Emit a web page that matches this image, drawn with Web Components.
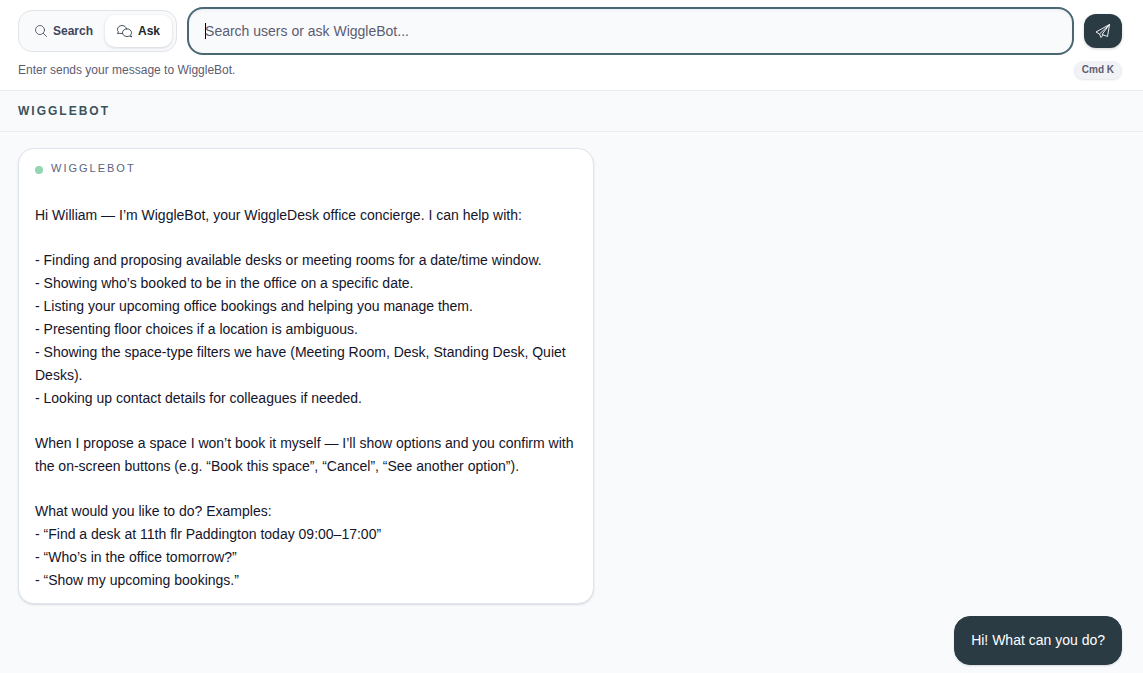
<!DOCTYPE html>
<html lang="en">
<head>
<meta charset="utf-8">
<meta name="viewport" content="width=device-width, initial-scale=1">
<title>WiggleBot</title>
<style>
  body {
    --dark: #2a3b44;
    --accent: #4a6873;
    --surface: #f8fafc;
    --border: #e0e4ec;
    --muted: #5c5c72;
    margin: 0;
    min-height: 100vh;
    background: var(--surface);
    color: #14142b;
    font: 14px/23px "Liberation Sans", Arial, sans-serif;
  }
</style>
</head>
<body>
<command-bar placeholder="Search users or ask WiggleBot...">
  <mode-switch slot="mode"></mode-switch>
  <span slot="hint">Enter sends your message to WiggleBot.</span>
  <key-hint slot="shortcut">Cmd K</key-hint>
</command-bar>
<chat-panel>
  <span slot="title">WIGGLEBOT</span>
  <bot-message author="WIGGLEBOT">
    <p>Hi William — I’m WiggleBot, your WiggleDesk office concierge. I can help with:</p>
    <p>- Finding and proposing available desks or meeting rooms for a date/time window.<br>
    - Showing who’s booked to be in the office on a specific date.<br>
    - Listing your upcoming office bookings and helping you manage them.<br>
    - Presenting floor choices if a location is ambiguous.<br>
    - Showing the space-type filters we have (Meeting Room, Desk, Standing Desk, Quiet Desks).<br>
    - Looking up contact details for colleagues if needed.</p>
    <p>When I propose a space I won’t book it myself — I’ll show options and you confirm with the on-screen buttons (e.g. “Book this space”, “Cancel”, “See another option”).</p>
    <p>What would you like to do? Examples:<br>
    - “Find a desk at 11th flr Paddington today 09:00–17:00”<br>
    - “Who’s in the office tomorrow?”<br>
    - “Show my upcoming bookings.”</p>
  </bot-message>
  <user-message>Hi! What can you do?</user-message>
</chat-panel>

<script>
// Search / Ask toggle
class ModeSwitch extends HTMLElement {
  constructor() {
    super();
    this.attachShadow({ mode: 'open' });
    this.shadowRoot.innerHTML = `
      <style>
        :host {
          display: flex; box-sizing: border-box; padding: 4px;
          border: 1px solid #e1e3e8; border-radius: 14px;
          background: var(--surface);
        }
        button {
          display: flex; align-items: center; gap: 6px;
          height: 32px; padding: 0 12px;
          border: 0; border-radius: 10px; background: none;
          color: #40445a; font: bold 12px/16px "Liberation Sans", Arial, sans-serif;
          cursor: pointer;
        }
        button[aria-pressed="true"] {
          background: #fff; color: #1c2630;
          box-shadow: 0 1px 3px rgba(20, 30, 50, .16);
        }
        svg { fill: none; stroke: currentColor; stroke-width: .8; stroke-linecap: round; stroke-linejoin: round; }
      </style>
      <button type="button" aria-pressed="false">
        <svg width="12" height="12" viewBox="0 0 12 12" aria-hidden="true">
          <circle cx="5" cy="5" r="4.5"/><path d="M8.3 8.3l3.2 3.2"/>
        </svg>
        Search
      </button>
      <button type="button" aria-pressed="true">
        <svg width="15" height="13" viewBox="0 0 15 13" aria-hidden="true">
          <path d="M5.4 8.3C4.5 8.6 3.5 8.6 2.7 8.3L.6 8.7l.7-1.9C.7 6.100.5 5.3.5 4.5.5 2.3 2.5.5 5 .5c2.300 0 4.200 1.4 4.500 3.300"/>
          <path d="M13.7 9.800c.5-.6.8-1.3.8-2.100 0-2.100-2-3.800-4.500-3.800S5.5 5.600 5.5 7.7s2 3.800 4.500 3.800c.8 0 1.500-.2 2.200-.5l2.200.7z"/>
        </svg>
        Ask
      </button>
    `;
    const buttons = this.shadowRoot.querySelectorAll('button');
    buttons.forEach(button => {
      button.addEventListener('click', () => {
        buttons.forEach(b => b.setAttribute('aria-pressed', String(b === button)));
      });
    });
  }
}

// Keyboard shortcut pill
class KeyHint extends HTMLElement {
  constructor() {
    super();
    this.attachShadow({ mode: 'open' });
    this.shadowRoot.innerHTML = `
      <style>
        :host {
          display: block; padding: 0 8px; border-radius: 9px;
          background: #f1f2f6; color: var(--muted);
          font-size: 10px; line-height: 18px; font-weight: bold;
          box-shadow: 0 1px 2px rgba(20, 30, 50, .12);
        }
      </style>
      <slot></slot>
    `;
  }
}

// Top bar: mode, text box, send button and the hint row
class CommandBar extends HTMLElement {
  constructor() {
    super();
    this.attachShadow({ mode: 'open' });
    this.shadowRoot.innerHTML = `
      <style>
        :host {
          display: block; padding: 7px 21px 11px 18px;
          border-bottom: 1px solid #eceef1; background: #fff;
        }
        form { display: flex; align-items: center; gap: 10px; }
        input {
          flex: 1; min-width: 0; height: 48px; box-sizing: border-box;
          padding: 0 16px; border: 2px solid var(--accent); border-radius: 16px;
          outline: 0; color: #14142b; font: inherit;
          background: var(--surface);
          box-shadow: inset 0 2px 3px rgba(20, 30, 50, .04);
        }
        input::placeholder { color: var(--muted); opacity: 1; }
        /* text cursor of the empty field */
        input:placeholder-shown {
          caret-color: transparent;
          background: linear-gradient(#000, #000) 16px center / 1px 16px no-repeat var(--surface);
        }
        .send {
          display: grid; place-items: center;
          width: 38px; height: 34px; padding: 0;
          border: 0; border-radius: 12px; background: var(--dark); color: #fff;
          box-shadow: 0 1px 3px rgba(20, 30, 50, .2); cursor: pointer;
        }
        .hints {
          display: flex; align-items: center; justify-content: space-between;
          margin-top: 6px; color: var(--muted); font-size: 12px; line-height: 18px;
        }
      </style>
      <form>
        <slot name="mode"></slot>
        <input type="text" aria-label="Message">
        <button class="send" type="submit" aria-label="Send">
          <svg width="16" height="16" viewBox="0 0 16 16" fill="none" stroke="currentColor" stroke-width=".9" stroke-linejoin="round" aria-hidden="true">
            <path d="M14.500 1.500L1 9l3.500 2 10-9.500-2 12L7 11.500z"/>
            <path d="M4.500 11l1.500 3.500 2.200-2.600"/>
          </svg>
        </button>
      </form>
      <div class="hints"><slot name="hint"></slot><slot name="shortcut"></slot></div>
    `;
    this.shadowRoot.querySelector('form').addEventListener('submit', e => e.preventDefault());
  }

  connectedCallback() {
    this.shadowRoot.querySelector('input').placeholder = this.getAttribute('placeholder') || '';
  }
}

// Titled conversation area
class ChatPanel extends HTMLElement {
  constructor() {
    super();
    this.attachShadow({ mode: 'open' });
    this.shadowRoot.innerHTML = `
      <style>
        :host { display: block; }
        h2 {
          margin: 0; padding: 0 18px; border-bottom: 1px solid #eceef1;
          color: #3c525c; font-size: 12px; line-height: 40px; letter-spacing: 2px;
        }
        .messages {
          display: flex; flex-direction: column; gap: 12px;
          padding: 16px 21px 8px 18px;
        }
      </style>
      <h2><slot name="title"></slot></h2>
      <div class="messages"><slot></slot></div>
    `;
  }
}

class BotMessage extends HTMLElement {
  constructor() {
    super();
    this.attachShadow({ mode: 'open' });
  }

  connectedCallback() {
    this.shadowRoot.innerHTML = `
      <style>
        :host {
          display: block; box-sizing: border-box; width: 100%; max-width: 576px;
          padding: 12px 16px 11px; border: 1px solid var(--border); border-radius: 16px;
          background: #fff; box-shadow: 0 1px 2px rgba(20, 30, 50, .14);
        }
        header {
          display: flex; align-items: center; gap: 8px; margin-bottom: 29px;
          color: #5a6384; font-size: 11px; line-height: 14px; letter-spacing: 2px;
        }
        .dot { width: 8px; height: 8px; margin-top: 4px; border-radius: 50%; background: #8fd6b1; }
        .body { display: grid; gap: 22px; }
        ::slotted(p) { margin: 0; }
      </style>
      <header><span class="dot"></span><span>${this.getAttribute('author')}</span></header>
      <div class="body"><slot></slot></div>
    `;
  }
}

class UserMessage extends HTMLElement {
  constructor() {
    super();
    this.attachShadow({ mode: 'open' });
    this.shadowRoot.innerHTML = `
      <style>
        :host {
          display: block; align-self: flex-end; padding: 12px 16px;
          border: 1px solid var(--dark); border-radius: 16px;
          background: var(--dark); color: #fff;
          box-shadow: 0 1px 2px rgba(20, 30, 50, .14);
        }
      </style>
      <slot></slot>
    `;
  }
}

customElements.define('mode-switch', ModeSwitch);
customElements.define('key-hint', KeyHint);
customElements.define('command-bar', CommandBar);
customElements.define('chat-panel', ChatPanel);
customElements.define('bot-message', BotMessage);
customElements.define('user-message', UserMessage);
</script>
</body>
</html>
